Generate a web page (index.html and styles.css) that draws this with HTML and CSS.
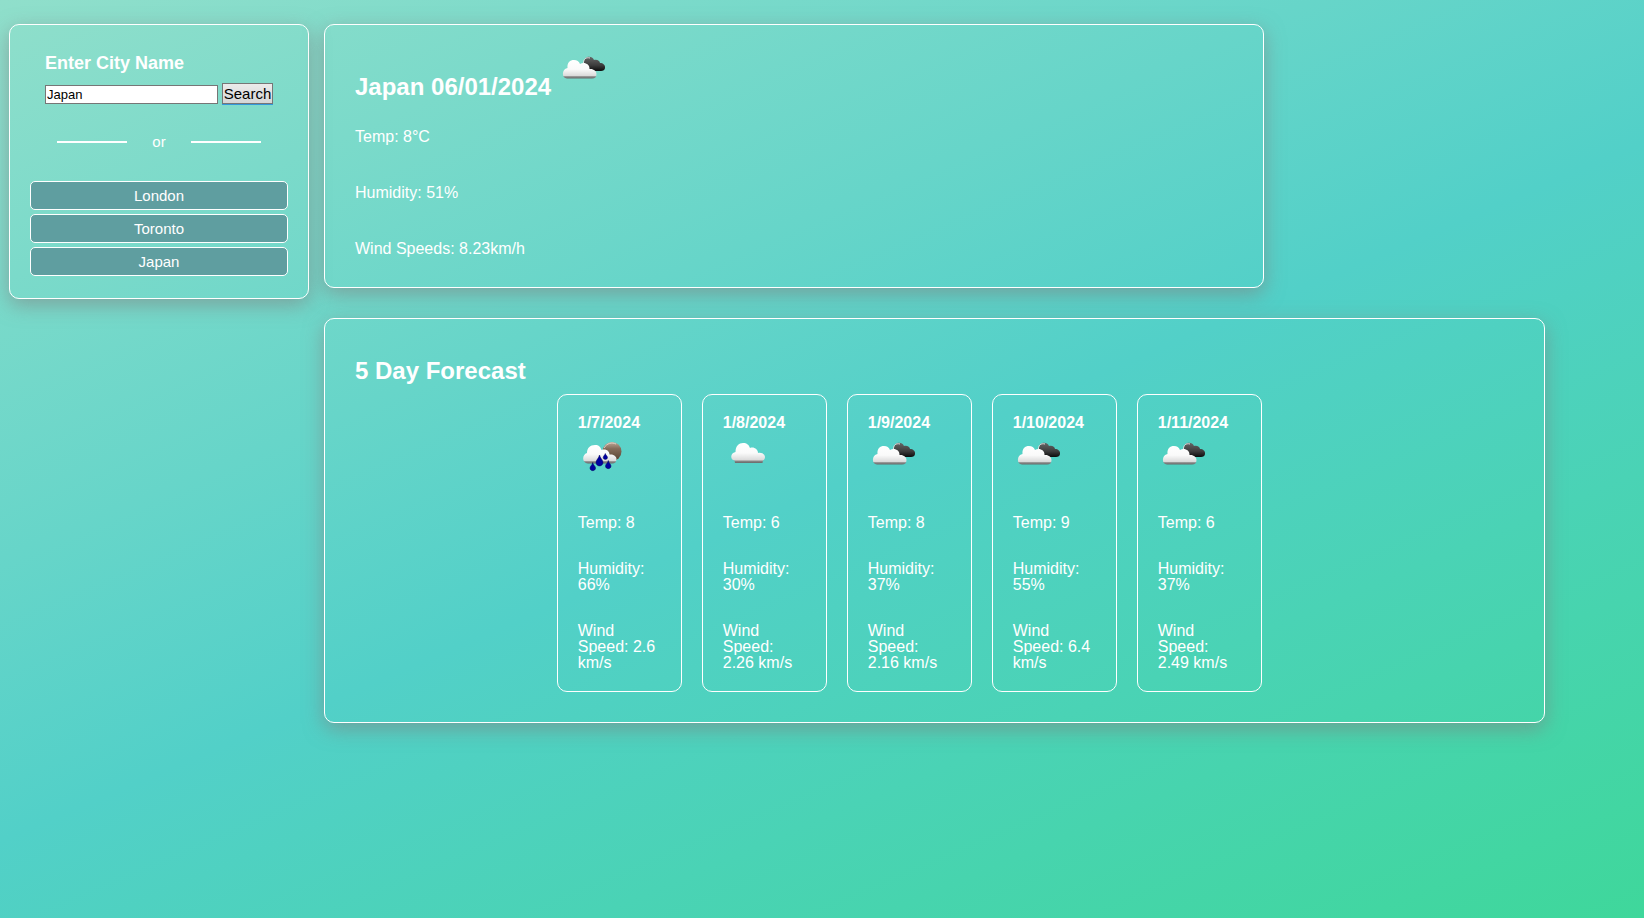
FILE: index.html
```html
<!DOCTYPE html>
<html lang="en">
<head>
    <meta charset="UTF-8">
    <meta name="viewport" content="width=device-width, initial-scale=1.0">
    <title>Weather Dashboard</title>
    <link rel="stylesheet" href="styles.css">
</head>
<body>
    <!-- Weather icons -->
    <svg class="icon-defs" aria-hidden="true">
        <defs>
            <linearGradient id="cloud-fill" x1="0" y1="0" x2="0" y2="1">
                <stop offset="0" stop-color="#ffffff"/>
                <stop offset="0.5" stop-color="#fafafa"/>
                <stop offset="0.85" stop-color="#dadada"/>
                <stop offset="0.9" stop-color="#8a8a8a"/>
                <stop offset="1" stop-color="#686868"/>
            </linearGradient>
            <linearGradient id="dark-fill" x1="0" y1="0" x2="0" y2="1">
                <stop offset="0" stop-color="#666666"/>
                <stop offset="0.6" stop-color="#3c3c3c"/>
                <stop offset="1" stop-color="#0c0c0c"/>
            </linearGradient>
            <linearGradient id="moon-fill" x1="0" y1="0" x2="0" y2="1">
                <stop offset="0" stop-color="#c0a898"/>
                <stop offset="0.35" stop-color="#846c5a"/>
                <stop offset="1" stop-color="#54402f"/>
            </linearGradient>
        </defs>
        <symbol id="broken-clouds" viewBox="0 0 50 50">
            <path fill="url(#dark-fill)" d="M29 26 C26 24 25 20 26 17 C26 11 34 10 36 15 C39 14 42 16 42 18 C45 18 47.500 20 47 23 C47 25 45 26 43 26 Z"/>
            <path fill="none" stroke="#e4e4e4" stroke-width="1" d="M25.500 18 C25.500 14 28 12 32 13"/>
            <path fill="url(#cloud-fill)" d="M9 33.500 C3.500 33.500 3.500 24 9.500 23 C9 17.500 12 15 16 15 C19 15 21 16.500 22 19 C26 16.500 32 19 31.500 24 C35.500 23.500 38.500 26 38.500 29 C38.500 32 37 33.500 34 33.500 Z"/>
        </symbol>
        <symbol id="rain" viewBox="0 0 50 50">
            <circle cx="34" cy="20.500" r="9.500" fill="url(#moon-fill)"/>
            <path fill="none" stroke="#e0d2c8" stroke-width="1" d="M26 17 C29 12 34 11 38 13"/>
            <path fill="url(#cloud-fill)" d="M10 32.500 C3.500 32 4 23.500 9 22 C9 17 12 14 17 14 C21 14 22.500 16 23.500 19 C28 17.500 31.500 20 31.500 23.500 C35 23 38.500 25 38.500 28 C38.500 31 37 32.500 34 32.500 Z"/>
            <g fill="#0000a0" stroke="#00005a" stroke-width="0.5">
                <path d="M21.500 24 C22 27 25 29 25 31.500 C25 36 18 36 18 31.500 C18 29 21 27 21.500 24 Z"/>
                <path d="M27.300 22.500 C27.500 24 29.500 25 29.500 26.500 C29.500 29 25.200 29 25.200 26.500 C25.200 25 27 24 27.300 22.500 Z"/>
                <path d="M14.700 31.500 C15 34 17.500 35 17.500 37 C17.500 40.500 12 40.500 12 37 C12 35 14.500 34 14.700 31.500 Z"/>
                <path d="M30.300 29.500 C30.500 32 33 33 33 35 C33 38.500 27.500 38.500 27.500 35 C27.500 33 30 32 30.300 29.500 Z"/>
            </g>
        </symbol>
        <symbol id="cloud" viewBox="0 0 50 50">
            <path fill="url(#cloud-fill)" d="M12 32 L11.500 29.500 C7 29 7 22 12.500 21 C12.500 15 16 12 20 12 C24 12 26 14 27 17 C31 15.500 35 18.500 35 22 C39 21 42 23.500 42 26 C42 28 41 29 40 29.500 L39.500 32 Z"/>
        </symbol>
    </svg>

    <aside class="search-card">
        <form>
            <label for="city-input">Enter City Name</label>
            <div class="search-row">
                <input type="text" id="city-input" value="Japan">
                <button type="submit" class="search-button">Search</button>
            </div>
        </form>
        <div class="divider">or</div>
        <div class="city-list">
            <button type="button">London</button>
            <button type="button">Toronto</button>
            <button type="button">Japan</button>
        </div>
    </aside>

    <main>
        <section class="current-card">
            <h2>Japan 06/01/2024 <svg class="weather-icon" role="img" aria-label="broken clouds"><use href="#broken-clouds"/></svg></h2>
            <p>Temp: 8°C</p>
            <p>Humidity: 51%</p>
            <p>Wind Speeds: 8.23km/h</p>
        </section>

        <section class="forecast-card">
            <h2>5 Day Forecast</h2>
            <div class="forecast-days">
                <div class="day">
                    <h3>1/7/2024</h3>
                    <svg class="weather-icon" role="img" aria-label="rain"><use href="#rain"/></svg>
                    <p>Temp: 8</p>
                    <p>Humidity: 66%</p>
                    <p>Wind Speed: 2.6 km/s</p>
                </div>
                <div class="day">
                    <h3>1/8/2024</h3>
                    <svg class="weather-icon" role="img" aria-label="cloud"><use href="#cloud"/></svg>
                    <p>Temp: 6</p>
                    <p>Humidity: 30%</p>
                    <p>Wind Speed: 2.26 km/s</p>
                </div>
                <div class="day">
                    <h3>1/9/2024</h3>
                    <svg class="weather-icon" role="img" aria-label="broken clouds"><use href="#broken-clouds"/></svg>
                    <p>Temp: 8</p>
                    <p>Humidity: 37%</p>
                    <p>Wind Speed: 2.16 km/s</p>
                </div>
                <div class="day">
                    <h3>1/10/2024</h3>
                    <svg class="weather-icon" role="img" aria-label="broken clouds"><use href="#broken-clouds"/></svg>
                    <p>Temp: 9</p>
                    <p>Humidity: 55%</p>
                    <p>Wind Speed: 6.4 km/s</p>
                </div>
                <div class="day">
                    <h3>1/11/2024</h3>
                    <svg class="weather-icon" role="img" aria-label="broken clouds"><use href="#broken-clouds"/></svg>
                    <p>Temp: 6</p>
                    <p>Humidity: 37%</p>
                    <p>Wind Speed: 2.49 km/s</p>
                </div>
            </div>
        </section>
    </main>
</body>
</html>
```
FILE: styles.css
```css
* {
    margin: 0;
    padding: 0;
    box-sizing: border-box;
}

body {
    min-height: 100vh;
    padding: 24px 14px 24px 9px;
    display: flex;
    align-items: flex-start;
    gap: 15px;
    font-family: "Liberation Sans", Arial, sans-serif;
    font-size: 16px;
    line-height: 1;
    color: white;
    background: linear-gradient(157deg, #90dfcb 0%, #52d0c8 52%, #3fd79b 100%);
}

.icon-defs {
    position: absolute;
    width: 0;
    height: 0;
}

h2 {
    font-size: 24px;
}

h3 {
    font-size: 16px;
}

.search-card,
.current-card,
.forecast-card {
    border: 1px solid white;
    border-radius: 10px;
    box-shadow: 0 6px 20px rgba(128, 128, 128, 0.6);
}

/* Sidebar */
.search-card {
    flex: 0 0 300px;
    padding: 29px 20px 22px;
}

.search-card form {
    padding: 0 15px;
}

.search-card label {
    display: block;
    margin-bottom: 11px;
    font-size: 18px;
    font-weight: bold;
}

.search-row {
    display: flex;
    align-items: flex-end;
    gap: 4px;
}

#city-input {
    width: 173px;
    height: 19px;
    padding: 1px;
    border: 1px solid #767676;
    background: white;
    color: black;
    font-family: inherit;
    font-size: 13px;
}

.search-button {
    width: 51px;
    height: 21px;
    border: 1px solid #767676;
    background: linear-gradient(#ebebeb, #d6d6d6);
    box-shadow: 0 1px #3498db;
    color: black;
    font-family: inherit;
    font-size: 15px;
}

.divider {
    display: flex;
    justify-content: center;
    align-items: center;
    gap: 25px;
    margin: 30px 0 32px;
    font-size: 15px;
}

.divider::before,
.divider::after {
    content: "";
    width: 70px;
    height: 2px;
    background: white;
}

.city-list {
    display: flex;
    flex-direction: column;
    gap: 4px;
}

.city-list button {
    height: 29px;
    border: 1px solid white;
    border-radius: 5px;
    background: cadetblue;
    color: white;
    font-family: inherit;
    font-size: 15px;
    cursor: pointer;
}

/* Weather */
main {
    flex: 1;
    display: flex;
    flex-direction: column;
    gap: 30px;
}

.weather-icon {
    width: 50px;
    height: 50px;
}

.current-card {
    width: 72%;
    padding: 20px 30px 30px;
}

.current-card p {
    margin-top: 40px;
}

.current-card h2 + p {
    margin-top: 30px;
}

.forecast-card {
    width: 93.5%;
    padding: 40px 30px 30px;
    display: grid;
    grid-template-columns: auto 1fr;
    gap: 11px 31px;
}

.forecast-days {
    grid-column: 2;
    grid-row: 2;
    display: flex;
    flex-wrap: wrap;
    gap: 20px;
}

.day {
    width: 125px;
    padding: 20px;
    border: 1px solid white;
    border-radius: 10px;
}

.day .weather-icon {
    display: block;
}

.day p {
    margin-top: 30px;
}

.day .weather-icon + p {
    margin-top: 34px;
}
```
